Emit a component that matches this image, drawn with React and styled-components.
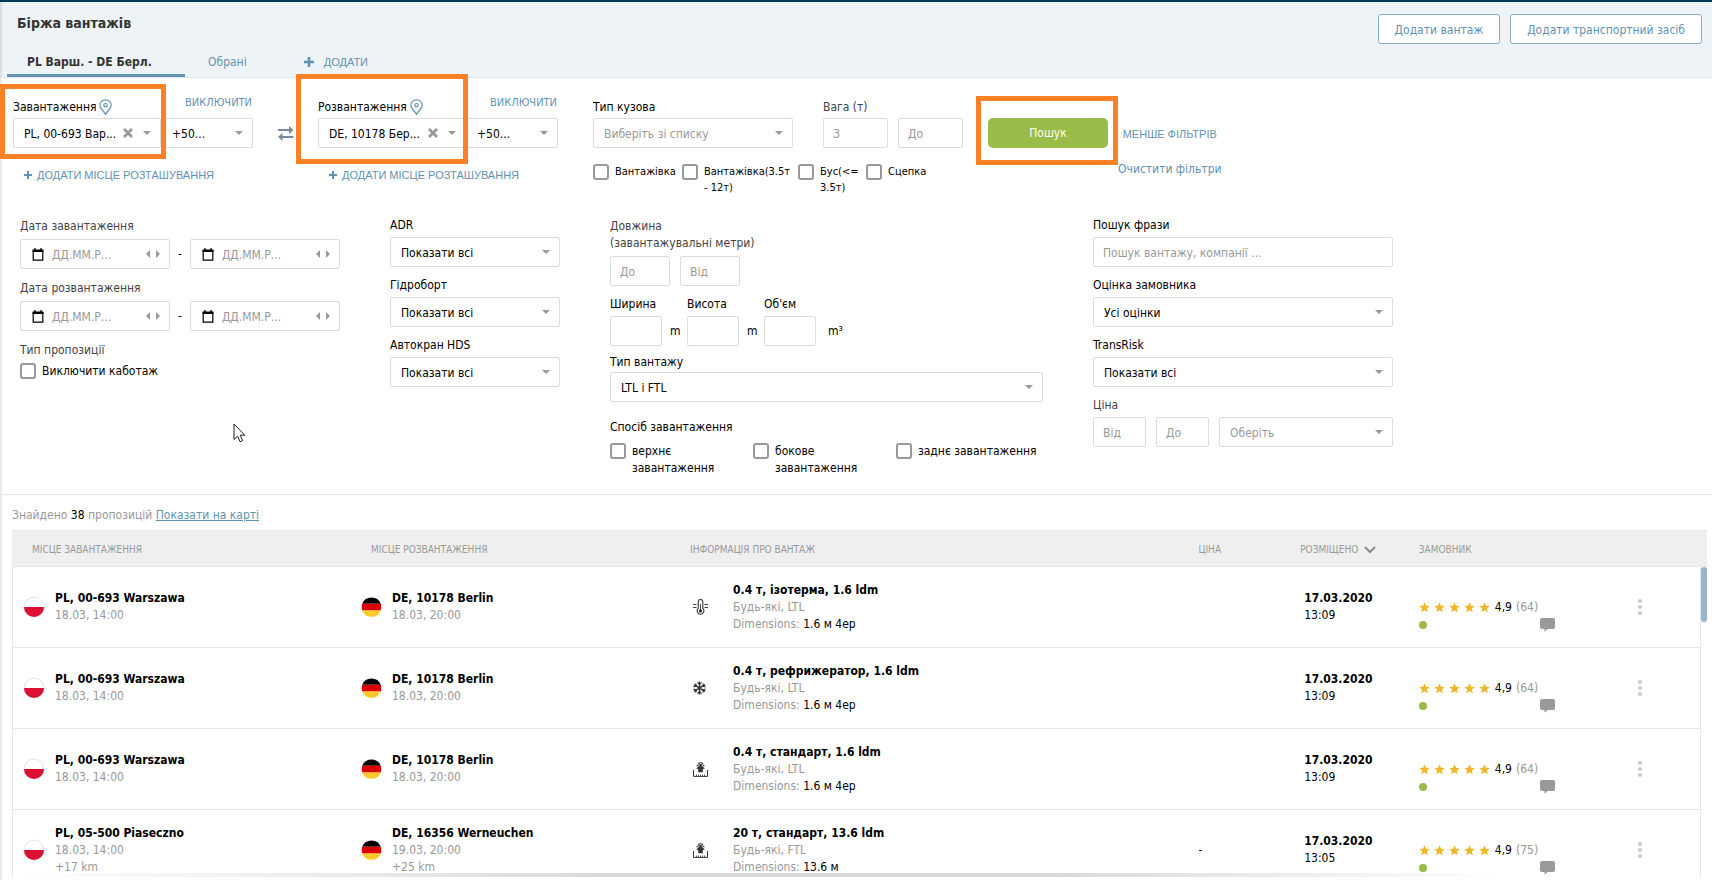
import React, { memo } from 'react';
import styled, { createGlobalStyle } from 'styled-components';

const blue = '#5f93b1';
const grey = '#999999';
const line = '#dfe6ec';

const GlobalStyle = createGlobalStyle`
  * {
    box-sizing: border-box;
  }
  body {
    margin: 0;
    background: #ffffff;
    color: #000000;
  }
  body, input, select, button {
    font-family: 'DejaVu Sans Condensed', 'Noto Sans', sans-serif;
    font-size: 12px;
    line-height: 16px;
  }
`;

const Page = styled.div`
  position: relative;
  display: flex;
  flex-direction: column;
  height: 100vh;
  overflow: hidden;
  box-shadow: inset 3px 0 3px -2px rgba(0, 0, 0, 0.15);
`;

const Header = styled.header`
  display: flex;
  justify-content: space-between;
  background: #edf3f6;
  border-top: 2px solid #003a5a;
  border-bottom: 1px solid #dfe5e8;
  box-shadow: inset 3px 0 3px -2px rgba(0, 0, 0, 0.15);
`;

const Title = styled.h1`
  margin: 0;
  padding: 11px 17px 10px;
  font-size: 14px;
  line-height: 20px;
  color: #333333;
`;

const Tabs = styled.nav`
  display: flex;
  padding-left: 7px;
`;

const Tab = styled.button`
  display: flex;
  align-items: center;
  gap: 10px;
  height: 34px;
  min-width: ${({ $active }) => ($active ? '178px' : '0')};
  padding: 6px ${({ $wide }) => ($wide ? '34px' : '23px')} 0 ${({ $active }) => ($active ? '20px' : '23px')};
  background: none;
  border: 0;
  border-bottom: 3px solid ${({ $active }) => ($active ? blue : 'transparent')};
  color: ${({ $active }) => ($active ? '#333333' : blue)};
  font-weight: ${({ $active }) => ($active ? 700 : 400)};
  cursor: pointer;
`;

const Caps = styled.span`
  font-family: 'Liberation Sans', Arial, sans-serif;
  font-size: 11px;
`;

const HeaderActions = styled.div`
  display: flex;
  gap: 10px;
  padding: 12px 10px 0 0;
`;

const OutlineButton = styled.button`
  height: 30px;
  padding: 1px 16px 0;
  background: #ffffff;
  border: 1px solid #86acc2;
  border-radius: 3px;
  color: ${blue};
  cursor: pointer;
`;

const TopFilters = styled.section`
  display: flex;
  align-items: flex-start;
  padding: 0 13px 21px;
`;

const Location = styled.div`
  width: 240px;
`;

const LabelRow = styled.div`
  display: flex;
  align-items: flex-end;
  justify-content: space-between;
  height: 40px;
  padding-bottom: 3px;
`;

const Label = styled.label`
  display: flex;
  align-items: center;
  gap: 3px;
  color: ${({ $soft }) => ($soft ? '#444444' : '#000000')};
`;

const LinkButton = styled.button`
  display: flex;
  align-items: center;
  gap: 5px;
  padding: 0;
  background: none;
  border: 0;
  color: ${blue};
  white-space: nowrap;
  cursor: pointer;
`;

const ExcludeButton = styled(LinkButton)`
  padding: 0 1px 4px 0;
  font-size: 11px;
`;

const AddPlace = styled(LinkButton)`
  margin: 19px 0 0 11px;
`;

const FieldRow = styled.div`
  display: flex;
  align-items: center;
  gap: ${({ $gap = 0 }) => `${$gap}px`};
`;

const control = `
  width: 100%;
  height: 30px;
  background: #ffffff;
  border: 1px solid #dcdcdc;
  border-radius: 2px;
  outline: none;
`;

const Input = styled.input`
  ${control}
  padding: 1px 9px 0;
  &::placeholder {
    color: ${grey};
    opacity: 1;
  }
`;

const Box = styled.div`
  position: relative;
  flex: ${({ $width }) => ($width ? `0 0 ${$width}px` : '1 1 0')};
  min-width: 0;
`;

const NativeSelect = styled.select`
  ${control}
  display: block;
  appearance: none;
  padding: 1px 24px 0 10px;
  color: ${({ $muted }) => ($muted ? grey : '#000000')};
`;

const Caret = styled.span`
  position: absolute;
  top: 13px;
  right: 10px;
  border: 4px solid transparent;
  border-top-color: ${grey};
  border-bottom: 0;
  pointer-events: none;
`;

const ClearButton = styled.button`
  position: absolute;
  top: 10px;
  right: 28px;
  display: flex;
  padding: 0;
  background: none;
  border: 0;
  cursor: pointer;
`;

const Highlight = styled.span`
  position: absolute;
  z-index: 2;
  inset: ${({ $inset }) => $inset};
  border: 5px solid #ff8127;
  pointer-events: none;
`;

const SwapButton = styled.button`
  display: flex;
  margin: 47px 24px 0;
  padding: 0;
  background: none;
  border: 0;
  cursor: pointer;
`;

const Vehicle = styled.div`
  width: 370px;
  margin: 0 25px 0 35px;
`;

const VehicleChecks = styled.div`
  display: grid;
  grid-template-columns: 89px 116px 68px 97px;
  margin-top: 16px;
`;

const CheckLabel = styled.label`
  display: flex;
  align-items: flex-start;
  gap: 6px;
  font-size: ${({ $tight }) => ($tight ? '11px' : '12px')};
  line-height: ${({ $tight }) => ($tight ? '16px' : '17px')};
  white-space: pre;
`;

const Checkbox = styled.input`
  appearance: none;
  flex: none;
  width: 16px;
  height: 16px;
  margin: 0;
  background: #ffffff;
  border: 2px solid ${grey};
  border-radius: 3px;
  &:checked {
    background: ${blue};
  }
`;

const SearchWrapper = styled.div`
  position: relative;
  margin-top: 40px;
`;

const SearchButton = styled.button`
  display: block;
  width: 120px;
  height: 30px;
  background: #99bb47;
  border: 0;
  border-radius: 5px;
  color: #ffffff;
  cursor: pointer;
`;

const SideLinks = styled.div`
  display: flex;
  flex-direction: column;
  align-items: center;
  gap: 19px;
  margin: 48px 0 0 10px;
`;

const MoreFilters = styled.section`
  display: grid;
  grid-template-columns: 370fr 220fr 483fr 619fr;
  padding: 0 0 17px 20px;
  border-bottom: 1px solid ${line};
`;

const Column = styled.div`
  display: flex;
  flex-direction: column;
  gap: ${({ $gap }) => `${$gap}px`};
  padding-top: ${({ $top = 0 }) => `${$top}px`};
  padding-right: ${({ $right = 0 }) => `${$right}px`};
`;

const PhraseColumn = styled(Column)`
  max-width: 300px;
`;

const Field = styled.div`
  display: flex;
  flex-direction: column;
  gap: ${({ $gap = 4 }) => `${$gap}px`};
`;

const Group = styled.fieldset`
  min-width: 0;
  margin: 0;
  padding: 0 0 ${({ $bottom = 0 }) => `${$bottom}px`};
  border: 0;
`;

const Legend = styled.legend`
  padding: 0;
  margin-bottom: ${({ $bottom = 5 }) => `${$bottom}px`};
  line-height: ${({ $tall }) => ($tall ? '17px' : '16px')};
  color: ${({ $soft }) => ($soft ? '#444444' : '#000000')};
`;

const DateBox = styled.div`
  ${control}
  display: flex;
  align-items: center;
  width: 150px;
  padding: 0 6px 0 11px;
  input {
    flex: 1;
    min-width: 0;
    padding: 1px 8px 0;
    border: 0;
    outline: none;
  }
  input::placeholder {
    color: ${grey};
    opacity: 1;
  }
`;

const StepButton = styled.button`
  display: flex;
  padding: 0 3px;
  background: none;
  border: 0;
  cursor: pointer;
`;

const SizeGrid = styled.div`
  display: grid;
  grid-template-columns: 52px 25px 52px 25px 52px auto;
  row-gap: 4px;
  align-items: center;
`;

const SizeLabel = styled.label`
  grid-column: span 2;
`;

const Unit = styled.span`
  padding-left: ${({ $last }) => ($last ? '12px' : '8px')};
`;

const LoadingTypes = styled(Group)`
  margin-top: 9px;
`;

const LoadingGrid = styled.div`
  display: grid;
  grid-template-columns: repeat(3, 143px);
`;

const Found = styled.p`
  height: 35px;
  margin: 0;
  padding: 12px 12px 0;
  color: ${grey};
  strong {
    font-weight: 400;
    color: #000000;
  }
  a {
    color: ${blue};
  }
`;

const Results = styled.div`
  position: relative;
  flex: 1;
  min-height: 0;
  margin: 0 5px 3px 12px;
  overflow: hidden;
  &::after {
    content: '';
    position: absolute;
    left: 0;
    right: 200px;
    bottom: 0;
    height: 4px;
    background: linear-gradient(90deg, rgba(255, 255, 255, 0), #d9d9d9 40%, #d9d9d9 70%, rgba(255, 255, 255, 0));
  }
`;

const ScrollThumb = styled.span`
  position: absolute;
  top: 37px;
  right: 0;
  width: 6px;
  height: 55px;
  border-radius: 3px;
  background: #98b6ca;
`;

const Table = styled.table`
  width: 100%;
  table-layout: fixed;
  border-collapse: separate;
  border-spacing: 0;
`;

const Th = styled.th`
  width: ${({ $width }) => $width || 'auto'};
  height: 37px;
  padding: 2px 0 0 ${({ $left = 0 }) => `${$left}px`};
  background: #efefef;
  border: solid ${line};
  border-width: 1px 0;
  color: ${grey};
  font-size: 10px;
  font-weight: 400;
  text-align: left;
`;

const SortButton = styled.button`
  display: flex;
  align-items: center;
  gap: 6px;
  padding: 0;
  background: none;
  border: 0;
  color: ${grey};
  font-size: 10px;
  cursor: pointer;
`;

const Td = styled.td`
  height: 81px;
  padding: ${({ $top = 0 }) => `${$top}px`} 0 0 ${({ $left = 0 }) => `${$left}px`};
  border-bottom: 1px solid ${line};
  line-height: 17px;
  &:first-child {
    border-left: 1px solid ${line};
  }
`;

const Gutter = styled.td`
  border-left: 1px solid ${line};
`;

const Media = styled.div`
  display: flex;
  align-items: center;
  gap: ${({ $gap }) => `${$gap}px`};
`;

const Muted = styled.div`
  color: ${grey};
  b {
    font-weight: 400;
    color: #000000;
  }
`;

const Strong = styled.div`
  font-weight: 700;
`;

const Rating = styled.div`
  display: flex;
  align-items: center;
  gap: 4px;
  white-space: nowrap;
  span {
    color: ${grey};
  }
`;

const Stars = styled.span`
  display: flex;
  gap: 4px;
  margin-right: 1px;
`;

const Contact = styled.div`
  display: flex;
  align-items: center;
  justify-content: space-between;
  width: 136px;
  height: 18px;
`;

const Online = styled.span`
  width: 8px;
  height: 8px;
  border-radius: 50%;
  background: #9aba46;
`;

const IconButton = styled.button`
  display: flex;
  padding: 0;
  background: none;
  border: 0;
  cursor: pointer;
`;

const Pointer = styled.svg`
  position: absolute;
  top: 423px;
  left: 233px;
`;

const PinIcon = () => (
  <svg width="13" height="16" viewBox="0 0 13 16" fill="none" stroke={blue} strokeWidth="1.2">
    <path d="M6.500.8C3.300.8.8 3.200.8 6.300c0 3.500 3.800 5.300 5.700 9 1.900-3.700 5.700-5.500 5.700-9C12.200 3.200 9.700.8 6.500.8z" />
    <circle cx="6.500" cy="6.200" r="1.700" />
  </svg>
);

const PlusIcon = ({ size }) => (
  <svg width={size} height={size} viewBox="0 0 10 10" fill={blue}>
    <path d="M3.700 0h2.600v3.700H10v2.600H6.300V10H3.700V6.300H0V3.700h3.700z" />
  </svg>
);

const CloseIcon = () => (
  <svg width="10" height="10" viewBox="0 0 10 10" stroke={grey} strokeWidth="2.800">
    <path d="M1 1l8 8M9 1L1 9" />
  </svg>
);

const SwapIcon = () => (
  <svg width="17" height="17" viewBox="0 0 17 17" fill="#7b8c9b">
    <path d="M1 4h11V1l4.500 4-4.500 4V6H1zM16.500 11h-11V8L1 12l4.500 4v-3h11z" />
  </svg>
);

const CalendarIcon = () => (
  <svg width="12" height="13" viewBox="0 0 12 13">
    <path d="M1.200 2.500h9.600v9.700H1.200z" fill="none" stroke="#000" strokeWidth="1.200" />
    <path d="M.6 1.500h10.800v2.600H.6zM2.300 0h1.300v2H2.300zM8.400 0h1.300v2H8.400z" />
  </svg>
);

const StepIcon = ({ next }) => (
  <svg width="4" height="8" viewBox="0 0 4 8" fill={grey}>
    <path d={next ? 'M0 0l4 4-4 4z' : 'M4 0L0 4l4 4z'} />
  </svg>
);

const PolandFlag = () => (
  <svg width="22" height="22" viewBox="0 0 22 22">
    <circle cx="11" cy="11" r="10" fill="#fff" stroke="#e4e4e4" />
    <path d="M1 11h20a10 10 0 0 1-20 0z" fill="#dc1034" />
  </svg>
);

const GermanyFlag = () => (
  <svg width="21" height="22" viewBox="0 0 21 22">
    <path d="M1.200 7.800a10 10 0 0 1 18.600 0z" />
    <path d="M1.200 7.800h18.600a10 10 0 0 1 0 6.600H1.200a10 10 0 0 1 0-6.600z" fill="#db0000" />
    <path d="M1.200 14.400h18.600a10 10 0 0 1-18.600 0z" fill="#ffca27" />
  </svg>
);

const ThermoIcon = () => (
  <svg width="15" height="16" viewBox="0 0 15 16" fill="none" stroke="#444">
    <path d="M5.200 9.200V2.800a2.300 2.300 0 0 1 4.600 0v6.400a3.400 3.400 0 1 1-4.600 0z" strokeWidth="1.200" />
    <path d="M7.500 5v6" />
    <circle cx="7.500" cy="11.900" r="1.700" fill="#333" stroke="none" />
    <path d="M0 5.500h3.500M0 8.500h3.500M11.500 5.500H15M11.500 8.500H15" />
  </svg>
);

const SnowIcon = () => (
  <svg width="15" height="14" viewBox="0 0 15 14" fill="none" stroke="#333" strokeWidth="1.500">
    <path d="M6.500.5v13M.9 3.700l11.200 6.600M12.100 3.700L.9 10.300" />
    <path d="M4.500 1.300l2 2 2-2M4.500 12.700l2-2 2 2M.5 5.800l2.800-.7-.7-2.800M12.500 8.200l-2.800.7.700 2.800M12.500 5.800l-2.800-.7.700-2.800M.5 8.200l2.800.7-.7 2.800" strokeWidth="1.200" />
  </svg>
);

const StandardIcon = () => (
  <svg width="15" height="15" viewBox="0 0 15 15" fill="none" stroke="#333">
    <path d="M.5 8v6.400h14V8" />
    <path d="M3.500 12.500V14M5.500 12.500V14M7.500 12.500V14M9.500 12.500V14M11.500 12.500V14" strokeWidth=".8" />
    <path d="M7.500 2.600l4.300 4-2 .4v3.300H5.200V7l-2-.4z" fill="#333" stroke="none" />
    <path d="M3.600 4.200C5 1.900 10 1.900 11.400 4.200M5 1.700C6.300.6 8.700.6 10 1.700" strokeWidth="1.100" />
  </svg>
);

const StarIcon = () => (
  <svg width="11" height="11" viewBox="0 0 11 11" fill="#efb72b">
    <path d="M5.500.2l1.500 3.500 3.800.3-2.900 2.500.9 3.800-3.300-2-3.300 2 .9-3.800L.2 4 4 3.700z" />
  </svg>
);

const BubbleIcon = () => (
  <svg width="15" height="14" viewBox="0 0 15 14" fill={grey}>
    <path d="M2 0h11a2 2 0 0 1 2 2v7a2 2 0 0 1-2 2H7.500L4.500 13.700V11H2a2 2 0 0 1-2-2V2a2 2 0 0 1 2-2z" />
  </svg>
);

const DotsIcon = () => (
  <svg width="8" height="18" viewBox="0 0 8 18" fill="#c8c8c8">
    <circle cx="4" cy="3" r="2.100" />
    <circle cx="4" cy="9" r="2.100" />
    <circle cx="4" cy="15" r="2.100" />
  </svg>
);

const SortIcon = () => (
  <svg width="12" height="8" viewBox="0 0 12 8" fill="none" stroke="#8c8c8c" strokeWidth="2">
    <path d="M1 1l5 5 5-5" />
  </svg>
);

const cargoIcons = { thermo: <ThermoIcon />, snow: <SnowIcon />, standard: <StandardIcon /> };

const Select = ({ id, label, value, muted, width, clearable, highlight }) => (
  <Box $width={width}>
    <NativeSelect id={id} aria-label={label} $muted={muted}>
      <option>{value}</option>
    </NativeSelect>
    {clearable && (
      <ClearButton type="button" aria-label="Clear">
        <CloseIcon />
      </ClearButton>
    )}
    <Caret />
    {highlight && <Highlight $inset={highlight} />}
  </Box>
);

const LocationFilter = ({ id, title, value, highlight }) => (
  <Location>
    <LabelRow>
      <Label htmlFor={id}>
        {title}
        <PinIcon />
      </Label>
      <ExcludeButton type="button">ВИКЛЮЧИТИ</ExcludeButton>
    </LabelRow>
    <FieldRow>
      <Select id={id} value={value} width={148} clearable highlight={highlight} />
      <Select label={`${title}: радіус`} value="+50..." />
    </FieldRow>
    <AddPlace type="button">
      <PlusIcon size={8} />
      <Caps>ДОДАТИ МІСЦЕ РОЗТАШУВАННЯ</Caps>
    </AddPlace>
  </Location>
);

const Check = ({ children, tight }) => (
  <CheckLabel $tight={tight}>
    <Checkbox type="checkbox" />
    {children}
  </CheckLabel>
);

const SelectField = ({ id, title, value, gap }) => (
  <Field $gap={gap}>
    <Label htmlFor={id}>{title}</Label>
    <FieldRow>
      <Select id={id} value={value} />
    </FieldRow>
  </Field>
);

const DateInput = ({ label }) => (
  <DateBox>
    <CalendarIcon />
    <input type="text" aria-label={label} placeholder="ДД.ММ.Р..." />
    <StepButton type="button" aria-label="Previous day"><StepIcon /></StepButton>
    <StepButton type="button" aria-label="Next day"><StepIcon next /></StepButton>
  </DateBox>
);

const DateRange = ({ title }) => (
  <Group>
    <Legend $soft>{title}</Legend>
    <FieldRow $gap={8}>
      <DateInput label={`${title} від`} />
      -
      <DateInput label={`${title} до`} />
    </FieldRow>
  </Group>
);

const Place = ({ flag, title, date, extra }) => (
  <Media $gap={10}>
    {flag}
    <div>
      <Strong>{title}</Strong>
      <Muted>{date}</Muted>
      {extra && <Muted>{extra}</Muted>}
    </div>
  </Media>
);

const warszawa = { title: 'PL, 00-693 Warszawa', date: '18.03, 14:00' };
const berlin = { title: 'DE, 10178 Berlin', date: '18.03, 20:00' };

const offers = [
  { id: 1, from: warszawa, to: berlin, icon: 'thermo', cargo: '0.4 т, ізотерма, 1.6 ldm', kind: 'Будь-які, LTL', size: '1.6 м 4ер', time: '13:09', votes: 64 },
  { id: 2, from: warszawa, to: berlin, icon: 'snow', cargo: '0.4 т, рефрижератор, 1.6 ldm', kind: 'Будь-які, LTL', size: '1.6 м 4ер', time: '13:09', votes: 64 },
  { id: 3, from: warszawa, to: berlin, icon: 'standard', cargo: '0.4 т, стандарт, 1.6 ldm', kind: 'Будь-які, LTL', size: '1.6 м 4ер', time: '13:09', votes: 64 },
  {
    id: 4,
    from: { title: 'PL, 05-500 Piaseczno', date: '18.03, 14:00', extra: '+17 km' },
    to: { title: 'DE, 16356 Werneuchen', date: '19.03, 20:00', extra: '+25 km' },
    icon: 'standard',
    cargo: '20 т, стандарт, 13.6 ldm',
    kind: 'Будь-які, FTL',
    size: '13.6 м',
    price: '-',
    time: '13:05',
    votes: 75,
  },
];

const OfferRow = memo(({ offer }) => (
  <tr>
    <Td $left={10}><Place flag={<PolandFlag />} {...offer.from} /></Td>
    <Td $left={10}><Place flag={<GermanyFlag />} {...offer.to} /></Td>
    <Td $left={20}>
      <Media $gap={25}>
        {cargoIcons[offer.icon]}
        <div>
          <Strong>{offer.cargo}</Strong>
          <Muted>{offer.kind}</Muted>
          <Muted>Dimensions: <b>{offer.size}</b></Muted>
        </div>
      </Media>
    </Td>
    <Td>{offer.price}</Td>
    <Td $left={4}>
      <Strong>17.03.2020</Strong>
      {offer.time}
    </Td>
    <Td $top={18}>
      <Rating>
        <Stars>
          {[1, 2, 3, 4, 5].map((n) => <StarIcon key={n} />)}
        </Stars>
        4,9
        <span>({offer.votes})</span>
      </Rating>
      <Contact>
        <Online />
        <IconButton type="button" aria-label="Message"><BubbleIcon /></IconButton>
      </Contact>
    </Td>
    <Td $left={14}>
      <IconButton type="button" aria-label="Menu"><DotsIcon /></IconButton>
    </Td>
    <Gutter />
  </tr>
));

const App = () => (
  <Page>
    <GlobalStyle />
    <Header>
      <div>
        <Title>Біржа вантажів</Title>
        <Tabs>
          <Tab $active>PL Варш. - DE Берл.</Tab>
          <Tab $wide>Обрані</Tab>
          <Tab>
            <PlusIcon size={10} />
            <Caps>ДОДАТИ</Caps>
          </Tab>
        </Tabs>
      </div>
      <HeaderActions>
        <OutlineButton>Додати вантаж</OutlineButton>
        <OutlineButton>Додати транспортний засіб</OutlineButton>
      </HeaderActions>
    </Header>

    <TopFilters>
      <LocationFilter id="from" title="Завантаження" value="PL, 00-693 Вар..." highlight="-34px -5px -11px -13px" />
      <SwapButton type="button" aria-label="Swap"><SwapIcon /></SwapButton>
      <LocationFilter id="to" title="Розвантаження" value="DE, 10178 Бер..." highlight="-44px -2px -16px -22px" />
      <Vehicle>
        <FieldRow $gap={30}>
          <Box $width={200}>
            <LabelRow><Label htmlFor="body">Тип кузова</Label></LabelRow>
            <Select id="body" value="Виберіть зі списку" muted />
          </Box>
          <Box>
            <LabelRow><Label htmlFor="weight" $soft>Вага (т)</Label></LabelRow>
            <FieldRow $gap={10}>
              <Input id="weight" placeholder="З" />
              <Input aria-label="Вага до" placeholder="До" />
            </FieldRow>
          </Box>
        </FieldRow>
        <VehicleChecks>
          <Check tight>Вантажівка</Check>
          <Check tight>{'Вантажівка(3.5т\n- 12т)'}</Check>
          <Check tight>{'Бус(<=\n3.5т)'}</Check>
          <Check tight>Сцепка</Check>
        </VehicleChecks>
      </Vehicle>
      <SearchWrapper>
        <SearchButton>Пошук</SearchButton>
        <Highlight $inset="-22px -10px -17px -12px" />
      </SearchWrapper>
      <SideLinks>
        <LinkButton type="button"><Caps>МЕНШЕ ФІЛЬТРІВ</Caps></LinkButton>
        <LinkButton type="button">Очистити фільтри</LinkButton>
      </SideLinks>
    </TopFilters>

    <MoreFilters>
      <Column $gap={11} $top={1}>
        <DateRange title="Дата завантаження" />
        <DateRange title="Дата розвантаження" />
        <Group>
          <Legend $soft>Тип пропозиції</Legend>
          <Check>Виключити каботаж</Check>
        </Group>
      </Column>
      <Column $gap={10} $right={50}>
        <SelectField id="adr" title="ADR" value="Показати всі" />
        <SelectField id="lift" title="Гідроборт" value="Показати всі" />
        <SelectField id="hds" title="Автокран HDS" value="Показати всі" />
      </Column>
      <Column $gap={8} $right={50} $top={1}>
        <Group $bottom={2}>
          <Legend $soft $tall $bottom={4}>
            Довжина
            <br />
            (завантажувальні метри)
          </Legend>
          <FieldRow $gap={10}>
            <Box $width={60}><Input aria-label="Довжина до" placeholder="До" /></Box>
            <Box $width={60}><Input aria-label="Довжина від" placeholder="Від" /></Box>
          </FieldRow>
        </Group>
        <SizeGrid>
          <SizeLabel htmlFor="width">Ширина</SizeLabel>
          <SizeLabel htmlFor="height">Висота</SizeLabel>
          <SizeLabel htmlFor="volume">Об'єм</SizeLabel>
          <Input id="width" />
          <Unit>m</Unit>
          <Input id="height" />
          <Unit>m</Unit>
          <Input id="volume" />
          <Unit $last>m³</Unit>
        </SizeGrid>
        <SelectField id="cargo" title="Тип вантажу" value="LTL і FTL" gap={2} />
        <LoadingTypes>
          <Legend $bottom={8}>Спосіб завантаження</Legend>
          <LoadingGrid>
            <Check>{'верхнє\nзавантаження'}</Check>
            <Check>{'бокове\nзавантаження'}</Check>
            <Check>заднє завантаження</Check>
          </LoadingGrid>
        </LoadingTypes>
      </Column>
      <PhraseColumn $gap={10}>
        <Field>
          <Label htmlFor="phrase">Пошук фрази</Label>
          <Input id="phrase" placeholder="Пошук вантажу, компанії ..." />
        </Field>
        <SelectField id="rate" title="Оцінка замовника" value="Усі оцінки" />
        <SelectField id="risk" title="TransRisk" value="Показати всі" />
        <Field>
          <Label htmlFor="price" $soft>Ціна</Label>
          <FieldRow $gap={10}>
            <Box $width={53}><Input id="price" placeholder="Від" /></Box>
            <Box $width={53}><Input aria-label="Ціна до" placeholder="До" /></Box>
            <Select label="Валюта" value="Оберіть" muted />
          </FieldRow>
        </Field>
      </PhraseColumn>
    </MoreFilters>

    <Found>
      Знайдено <strong>38</strong> пропозицій <a href="#map">Показати на карті</a>
    </Found>
    <Results>
      <Table>
        <thead>
          <tr>
            <Th $width="20%" $left={20}>МІСЦЕ ЗАВАНТАЖЕННЯ</Th>
            <Th $width="19%" $left={20}>МІСЦЕ РОЗВАНТАЖЕННЯ</Th>
            <Th $width="31%" $left={17}>ІНФОРМАЦІЯ ПРО ВАНТАЖ</Th>
            <Th $width="6%">ЦІНА</Th>
            <Th $width="7%">
              <SortButton type="button">
                РОЗМІЩЕНО
                <SortIcon />
              </SortButton>
            </Th>
            <Th $width="12%">ЗАМОВНИК</Th>
            <Th />
            <Th $width="7px" />
          </tr>
        </thead>
        <tbody>
          {offers.map((offer) => <OfferRow key={offer.id} offer={offer} />)}
        </tbody>
      </Table>
      <ScrollThumb />
    </Results>
    <Pointer width="13" height="20" viewBox="0 0 13 20" fill="#fff" stroke="#1c1c28">
      <path d="M1 1v15.500l3.600-3.300 2.400 5.500 2.600-1.100-2.400-5.400h4.600z" />
    </Pointer>
  </Page>
);

export default App;
